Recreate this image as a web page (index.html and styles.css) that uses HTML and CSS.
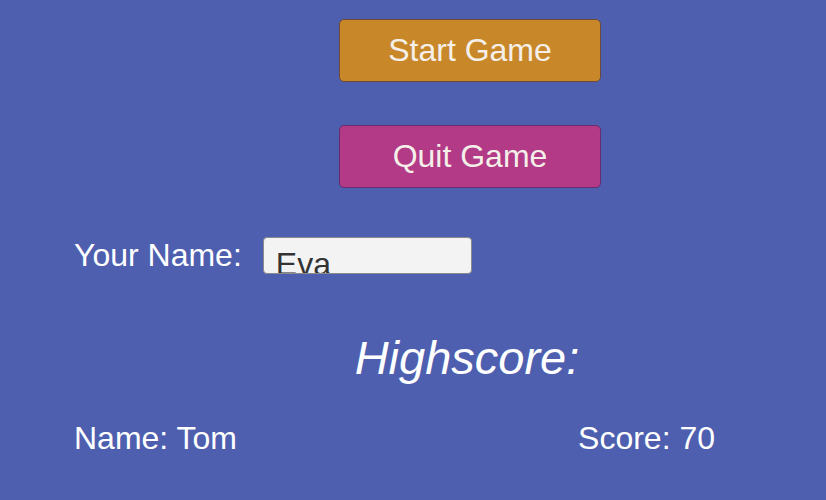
FILE: index.html
```html
<!DOCTYPE html>
<html>
<head>
<meta charset="utf-8">
<link rel="stylesheet" href="styles.css">
</head>
<body>
<main class="menu">
  <div class="buttons">
    <button class="btn btn-start">Start Game</button>
    <button class="btn btn-quit">Quit Game</button>
  </div>
  <div class="name-row">
    <span class="label">Your Name:</span>
    <div class="input">Eva</div>
  </div>
  <h1 class="title">Highscore:</h1>
  <div class="score-row">
    <span class="label">Name: Tom</span>
    <span class="label">Score: 70</span>
  </div>
</main>
</body>
</html>
```
FILE: styles.css
```css
html, body {
  margin: 0;
  padding: 0;
  width: 826px;
  height: 500px;
  overflow: hidden;
  background: #4e5fb0;
  font-family: "Liberation Sans", Arial, sans-serif;
}
.menu {
  display: flex;
  flex-direction: column;
}
.buttons {
  display: flex;
  flex-direction: column;
  align-items: flex-start;
  padding: 19px 0 0 339px;
  gap: 43px;
}
.btn {
  width: 262px;
  height: 63px;
  box-sizing: border-box;
  border-radius: 5px;
  font-family: "Liberation Sans", Arial, sans-serif;
  font-size: 32px;
  color: #f4efe9;
  padding: 0;
  margin: 0;
}
.btn-start {
  background: #c8882a;
  border: 1px solid #6b4a3a;
}
.btn-quit {
  background: #b33a86;
  border: 1px solid #6a2a6e;
}
.name-row {
  display: flex;
  align-items: center;
  padding: 48px 0 0 74px;
  height: 38px;
}
.label {
  font-size: 32px;
  color: #ffffff;
  line-height: 36px;
}
.input {
  margin-left: 21px;
  width: 209px;
  height: 37px;
  box-sizing: border-box;
  background: #f3f3f3;
  border: 1px solid #8a8a8a;
  border-radius: 4px;
  font-size: 32px;
  color: #333333;
  padding: 8px 0 0 12px;
  line-height: 36px;
  overflow: hidden;
}
.title {
  margin: 57px 0 0 0;
  font-weight: normal;
  font-style: italic;
  font-size: 47px;
  color: #ffffff;
  line-height: 53px;
  text-align: center;
  padding-left: 108px;
}
.score-row {
  display: flex;
  justify-content: space-between;
  padding: 36px 111px 0 74px;
}
```
